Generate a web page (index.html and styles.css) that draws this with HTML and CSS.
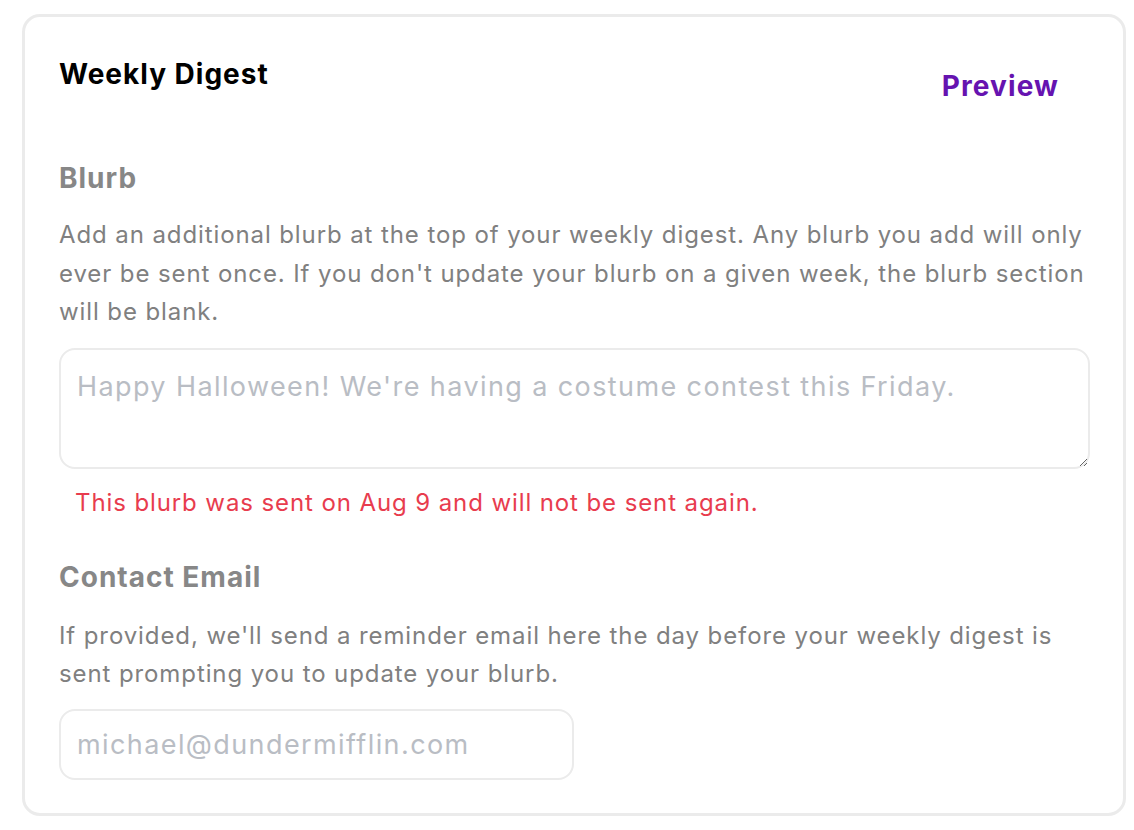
FILE: index.html
```html
<!DOCTYPE html>
<html>
<head>
<meta charset="utf-8">
<link rel="stylesheet" href="styles.css">
</head>
<body>
<div class="card">
  <div class="header">
    <h1 class="title">Weekly Digest</h1>
    <button class="preview">Preview</button>
  </div>
  <section class="field">
    <h2 class="label">Blurb</h2>
    <p class="desc">Add an additional blurb at the top of your weekly digest. Any blurb you add will only ever be sent once. If you don't update your blurb on a given week, the blurb section will be blank.</p>
    <textarea class="textarea" placeholder="Happy Halloween! We're having a costume contest this Friday."></textarea>
    <p class="error">This blurb was sent on Aug 9 and will not be sent again.</p>
  </section>
  <section class="field">
    <h2 class="label label-second">Contact Email</h2>
    <p class="desc">If provided, we'll send a reminder email here the day before your weekly digest is sent prompting you to update your blurb.</p>
    <input class="input" type="email" placeholder="michael@dundermifflin.com">
  </section>
</div>
</body>
</html>
```
FILE: styles.css
```css
* { box-sizing: border-box; }
html, body { margin: 0; padding: 0; background: #fff; }
body {
  font-family: Inter, "Noto Sans", sans-serif;
  padding: 14px 8px 0 22px;
}
.card {
  width: 1104px;
  height: 802px;
  border: 3px solid #ebebeb;
  border-radius: 18px;
  padding: 30px 33px 0 34px;
  overflow: hidden;
}
.header {
  display: flex;
  justify-content: space-between;
  align-items: flex-start;
}
.title {
  margin: 0;
  font-size: 28px;
  font-weight: 700;
  color: #000;
  line-height: 54px;
  letter-spacing: 1px;
}
.preview {
  background: none;
  border: none;
  font-family: inherit;
  font-size: 28px;
  font-weight: 700;
  color: #6613b0;
  padding: 0;
  margin: 12px 31px 0 0;
  line-height: 54px;
  letter-spacing: 1.1px;
}
.field { display: flex; flex-direction: column; }
.label {
  margin: 43px 0 0;
  font-size: 28px;
  font-weight: 700;
  color: #878787;
  line-height: 44px;
  letter-spacing: 1px;
}
.label-second { margin-top: 33px; }
.desc {
  margin: 16px 0 0;
  font-size: 24px;
  color: #808080;
  line-height: 38.5px;
  letter-spacing: 0.9px;
}
.label-second + .desc { margin-top: 18px; }
.textarea {
  margin-top: 16px;
  width: 100%;
  height: 121px;
  border: 2px solid #ebebeb;
  border-radius: 16px;
  padding: 20px 16px;
  font-family: inherit;
  font-size: 27px;
  letter-spacing: 1.4px;
  color: #333;
  resize: vertical;
  outline: none;
}
.textarea::placeholder, .input::placeholder { color: #b9bdc4; }
.error {
  margin: 15px 0 0 16px;
  font-size: 24px;
  color: #e83c4e;
  line-height: 38px;
  letter-spacing: 0.9px;
}
.input {
  margin-top: 15px;
  width: 515px;
  height: 71px;
  border: 2px solid #ebebeb;
  border-radius: 16px;
  padding: 0 16px;
  font-family: inherit;
  font-size: 27px;
  letter-spacing: 1.4px;
  color: #333;
  outline: none;
}
```
